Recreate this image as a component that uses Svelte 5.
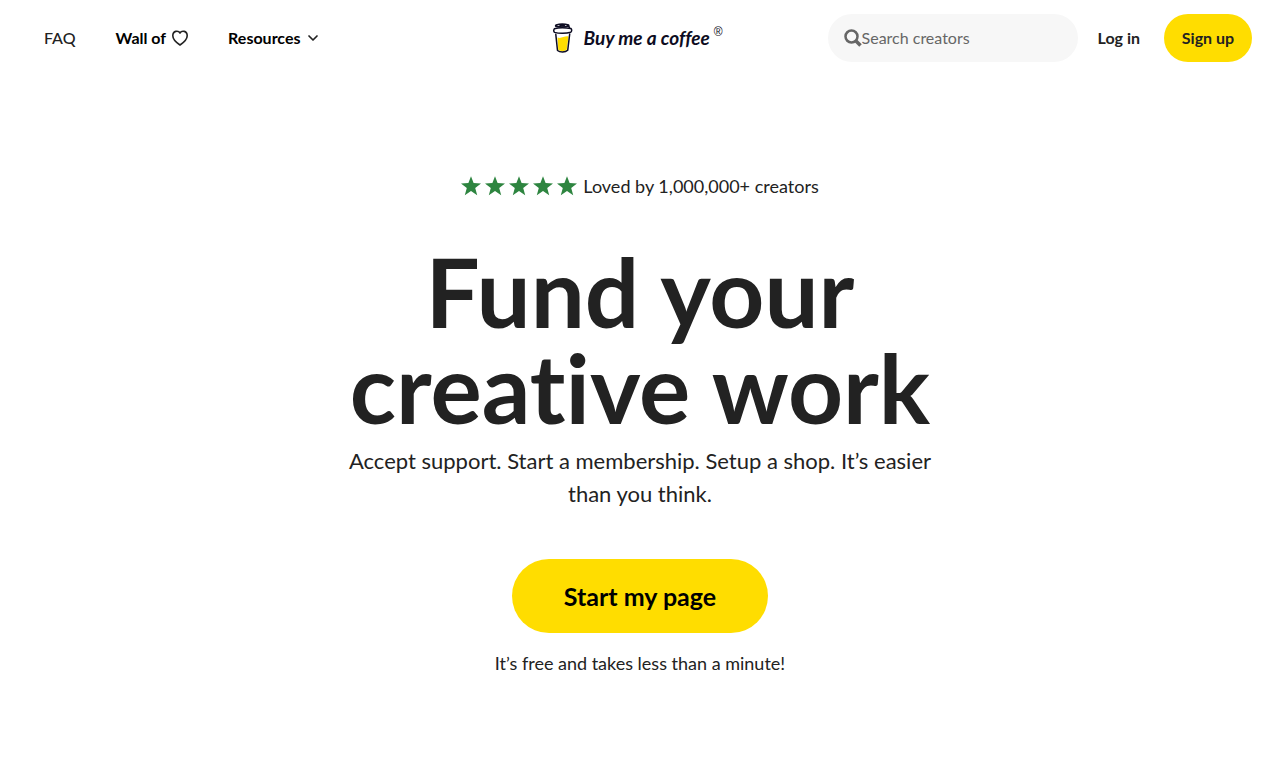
<script>
  const stars = [1, 2, 3, 4, 5];
  let query = $state('');
</script>

<svelte:head><title>Buy me a coffee</title></svelte:head>

<header>
  <nav aria-label="Main">
    <a class="faq" href="#faq">FAQ</a>
    <a class="wall" href="#wall">
      Wall of
      <svg width="16" height="16" viewBox="0 0 16 16" fill="none" stroke="#222" stroke-width="1.6" stroke-linejoin="round" aria-hidden="true">
        <path d="M8 3C6.500 .4 .8.3.8 5.700C.8 10 5.500 13.300 8 15C10.500 13.300 15.200 10 15.200 5.700C15.200.3 9.500.4 8 3Z" />
      </svg>
    </a>
    <button class="resources" type="button">
      Resources
      <svg width="12" height="8" viewBox="0 0 12 8" fill="none" stroke="#222" stroke-width="1.700" stroke-linecap="round" stroke-linejoin="round" aria-hidden="true">
        <path d="M2 2L6 6L10 2" />
      </svg>
    </button>
  </nav>

  <a class="logo" href="#home">
    <svg width="20" height="30" viewBox="0 0 20 30" fill="none" stroke="#0d0c22" stroke-width="1.500" stroke-linecap="round" stroke-linejoin="round" aria-hidden="true">
      <path fill="#fd0" stroke="none" d="M4.500 14.500C8 16 12 12.500 15.500 13.500L13.700 27C11 28.500 7.500 28.500 5.300 27Z" />
      <path d="M2.800 11.300L4.500 27.500C7 29.500 12.300 29.500 14.700 27.300L16.700 11" />
      <path fill="#fff" d="M1.300 5.800C.5 7 .6 8.900 1.600 9.400C6 10.700 13.500 10.600 17.600 9.200C18.900 8.600 19 6.600 18 5.600C13 4.700 5 4.700 1.300 5.800Z" />
      <path d="M16.500 5.200L15.600 2C12 .8 6.500.8 3.200 2C2.200 2.600 2.500 3.300 3.600 3.500C7.500 4.200 12 4 15.600 3M7 2.500L11.500 2.300" />
    </svg>
    <span class="wordmark">Buy me a coffee</span>
    <sup>®</sup>
  </a>

  <div class="account">
    <label class="search">
      <svg width="18" height="18" viewBox="0 0 18 18" fill="none" stroke="#666" aria-hidden="true">
        <circle cx="7.500" cy="7.500" r="6" stroke-width="2.500" />
        <path d="M12 12L16.500 16.500" stroke-width="3.500" />
      </svg>
      <input type="search" placeholder="Search creators" aria-label="Search creators" bind:value={query} />
    </label>
    <a class="login" href="#login">Log in</a>
    <a class="signup" href="#signup">Sign up</a>
  </div>
</header>

<main>
  <div class="rating">
    <div class="stars" aria-hidden="true">
      {#each stars as star (star)}
        <svg width="20" height="20" viewBox="0 0 20 20" fill="#2e8540">
          <path d="M10 .2L12.600 7.100L20 7.400L14.200 12L16.200 19.200L10 15.100L3.800 19.200L5.800 12L0 7.400L7.400 7.100Z" />
        </svg>
      {/each}
    </div>
    <span>Loved by 1,000,000+ creators</span>
  </div>
  <h1>Fund your<br />creative work</h1>
  <p class="lead">Accept support. Start a membership. Setup a shop. It’s easier than you think.</p>
  <a class="start" href="#start">Start my page</a>
  <p class="note">It’s free and takes less than a minute!</p>
</main>

<style>
  :global(body) {
    margin: 0;
    background: #fff;
    color: #222;
    font-family: Lato, "Liberation Sans", sans-serif;
    font-size: 16px;
    font-variant-ligatures: none;
    line-height: 24px;
  }
  a { color: inherit; text-decoration: none; }
  svg { display: block; flex: none; }
  header {
    display: grid;
    grid-template-columns: 1fr auto 1fr;
    align-items: center;
    padding: 14px 28px;
  }
  nav {
    display: flex;
    align-items: center;
    gap: 40px;
    padding-left: 16px;
    font-weight: 700;
  }
  .faq { font-weight: 500; }
  .wall, .resources { display: flex; align-items: center; gap: 6px; color: #000; }
  .resources {
    border: 0;
    padding: 0;
    background: none;
    font: inherit;
    cursor: pointer;
  }
  .logo { display: flex; align-items: center; height: 48px; padding-right: 4px; color: #0d0c22; }
  .wordmark {
    padding-left: 10px;
    font-size: 19px;
    font-style: italic;
    font-weight: 700;
    white-space: nowrap;
  }
  sup {
    align-self: flex-start;
    padding: 6px 0 0 4px;
    font-family: "Liberation Sans", sans-serif;
    font-size: 12px;
    line-height: 24px;
  }
  .account { display: flex; align-items: center; justify-content: flex-end; font-weight: 700; }
  .search {
    display: flex;
    align-items: center;
    box-sizing: border-box;
    width: 250px;
    height: 48px;
    padding: 0 16px;
    border-radius: 24px;
    background: #f7f7f7;
  }
  input {
    flex: 1;
    min-width: 0;
    padding: 0;
    border: 0;
    outline: 0;
    background: none;
    color: #222;
    font: inherit;
    font-weight: 400;
  }
  input::placeholder { color: #666; opacity: 1; }
  .login { margin: 0 24px 0 20px; white-space: nowrap; }
  .signup {
    min-width: 56px;
    padding: 12px 16px;
    border-radius: 24px;
    background: #fd0;
    text-align: center;
    white-space: nowrap;
  }
  main {
    display: flex;
    flex-direction: column;
    align-items: center;
    padding: 98px 24px 80px;
    text-align: center;
  }
  .rating { display: flex; align-items: center; gap: 6px; font-size: 18px; }
  .stars { display: flex; gap: 4px; }
  h1 { margin: 45px 0 0; font-size: 96px; line-height: 96px; font-weight: 700; }
  .lead { max-width: 620px; margin: 9px 0 0; font-size: 22px; line-height: 33px; }
  .start {
    box-sizing: border-box;
    min-width: 256px;
    margin-top: 49px;
    padding: 20px 48px;
    border-radius: 37px;
    background: #fd0;
    color: #000;
    font-size: 25px;
    line-height: 34px;
    font-weight: 700;
  }
  .note { margin: 18px 0 0; font-size: 18px; }
</style>
